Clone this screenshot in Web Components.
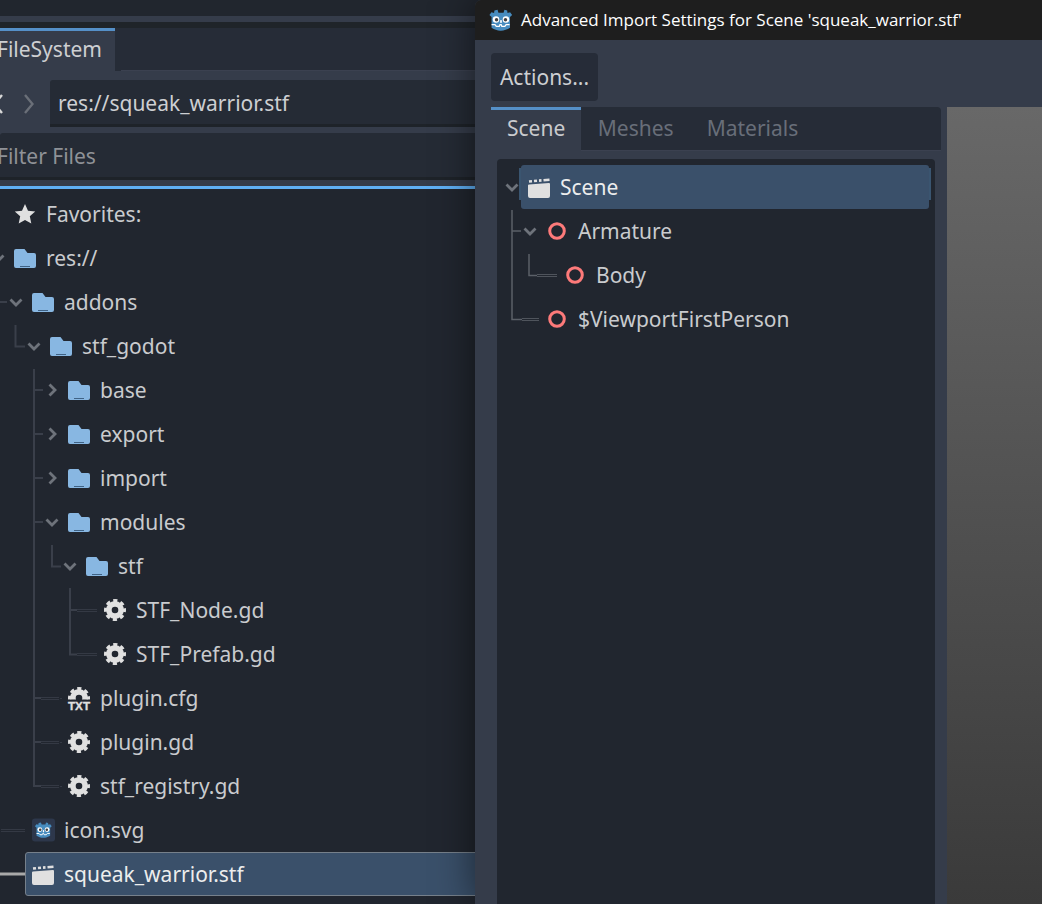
<!DOCTYPE html>
<html lang="en">
<head>
<meta charset="utf-8">
<title>Advanced Import Settings</title>
<style>
  html, body { margin: 0; height: 100%; overflow: hidden; background: #21262f; }
  body { font: 21px "Noto Sans", sans-serif; color: #c9cbce; }
</style>
</head>
<body>
<editor-page>
  <file-dock slot="dock"></file-dock>
  <import-window slot="window"></import-window>
</editor-page>

<script>
const GODOT_HEAD = `
  <path fill="#478cbf" d="M12 4l1 3.500h6L20 4l3.200.9.400 3 3-1 2.400 3.300-2.500 2.200V25c-3 2-7 3.400-10.500 3.400h-1C12 28.400 8 27 5 25V12.400L2.500 10.200 4.900 6.900l3 1 .4-3z"/>
  <circle cx="10.200" cy="15.400" r="3.800" fill="#fff"/><circle cx="21.800" cy="15.400" r="3.800" fill="#fff"/>
  <circle cx="10.800" cy="15.700" r="2" fill="#414042"/><circle cx="21.200" cy="15.700" r="2" fill="#414042"/>
  <rect x="15" y="16" width="2" height="3.500" rx=".8" fill="#fff"/>
  <path fill="none" stroke="#fff" stroke-width="1.500" d="M5 21.500h4l1.500 2h3.500l.8-2h1.400l.8 2h3.500l1.500-2h4"/>`;

const GEAR = `
  <circle cx="11" cy="11" r="6.100" fill="none" stroke="#e0e0e0" stroke-width="5.600"/>
  <circle cx="11" cy="11" r="9.400" fill="none" stroke="#e0e0e0" stroke-width="3.200" stroke-dasharray="4.100 3.282" stroke-dashoffset="2.050"/>`;

const ICONS = {
  star: `<path fill="#e0e0e0" d="M11 1l3 6.700 7.200.8-5.400 4.800 1.500 7.200L11 17l-6.300 3.500 1.500-7.200L.8 8.500 8 7.700z"/>`,
  folder: `<path fill="#88b7e2" d="M2 2h8.500l3 4H20a2 2 0 0 1 2 2v11a2 2 0 0 1-2 2H2a2 2 0 0 1-2-2V4a2 2 0 0 1 2-2z"/>
    <path stroke="#3f6285" d="M6 19.500h10"/>`,
  gear: GEAR,
  txt: `<svg x="0" y="0" width="22" height="12.500" viewBox="0 0 22 12.500" style="overflow:hidden">${GEAR}</svg>
    <text x="0" y="23" textLength="22" lengthAdjust="spacingAndGlyphs" font-family="Liberation Sans" font-weight="700" font-size="10.500" stroke="#e0e0e0" stroke-width=".3" fill="#e0e0e0">TXT</text>`,
  scene: `<path fill="#e0e0e0" d="M1 8.500l20-1.500a1 1 0 0 1 1 1V20a2 2 0 0 1-2 2H2a2 2 0 0 1-2-2V9.500a1 1 0 0 1 1-1z"/>
    <path stroke="#e0e0e0" stroke-width="2.600" d="M1 5.500l3-.3M6 5l3-.3M11 4.600l2.500-.2M15.500 4.200l6-.5"/>`,
  node: `<circle cx="11" cy="11" r="7.300" fill="none" stroke="#fd7a7a" stroke-width="3"/>`,
  godotfile: `<rect x="0" y="-.5" width="23" height="23" rx="3" fill="#2d374b"/><svg x="2" y="1.500" width="19" height="19" viewBox="1 2 30 28">${GODOT_HEAD}</svg>`,
  godot: `<svg x="-1" y="-1" width="24" height="24" viewBox="2 3 28 26">${GODOT_HEAD}</svg>`,
};

class GdIcon extends HTMLElement {
  connectedCallback() {
    const name = this.getAttribute('name');
    this.attachShadow({ mode: 'open' }).innerHTML = `
      <style>
        :host { display: block; width: 22px; height: 22px; flex: none; }
        svg { display: block; overflow: visible; }
      </style>
      <svg width="22" height="22" viewBox="0 0 22 22" aria-hidden="true">${ICONS[name] || ''}</svg>`;
  }
}
customElements.define('gd-icon', GdIcon);

class GdChevron extends HTMLElement {
  connectedCallback() {
    const dir = this.getAttribute('dir');
    const d = dir === 'down' ? 'M1.500 4.500L7 10l5.500-5.500' : dir === 'right' ? 'M4.500 1.500L10 7l-5.500 5.500' : '';
    this.attachShadow({ mode: 'open' }).innerHTML = `
      <style>
        :host { display: flex; width: 18px; align-items: center; justify-content: center; flex: none; }
        svg { display: block; }
      </style>
      <svg width="14" height="14" viewBox="0 0 14 14"><path d="${d}" fill="none" stroke="#6e737b" stroke-width="2.800"/></svg>`;
  }
}
customElements.define('gd-chevron', GdChevron);

class TreeRow extends HTMLElement {
  connectedCallback() {
    const depth = Number(this.getAttribute('depth') || 0);
    const arrow = this.getAttribute('arrow') || '';
    const icon = this.getAttribute('icon');
    this.attachShadow({ mode: 'open' }).innerHTML = `
      <style>
        :host {
          display: flex; height: 44px;
          margin-left: calc(var(--tree-origin, 14px) + ${depth * 18}px - 25px);
          margin-right: var(--tree-end, 0px);
        }
        .body {
          flex: 1; position: relative; display: flex; align-items: center; gap: 10px;
          padding-left: 7px; border-radius: 3px; box-sizing: border-box;
          white-space: nowrap;
        }
        :host([selected]) .body { background: #3a506a; color: #eceded; }
        :host([selected="outline"]) .body { border: 1px solid #76808b; padding-left: 6px; }
        :host([selected="bracket"]) .body::before,
        :host([selected="bracket"]) .body::after {
          content: ""; position: absolute; top: 3px; bottom: 9px; width: 2px; background: #3a5570;
        }
        :host([selected="bracket"]) .body::before { left: -2px; }
        :host([selected="bracket"]) .body::after { right: -2px; }
      </style>
      <gd-chevron dir="${arrow}"></gd-chevron>
      <div class="body"><gd-icon name="${icon}"></gd-icon><slot></slot></div>`;
  }
}
customElements.define('tree-row', TreeRow);

class GdTree extends HTMLElement {
  connectedCallback() {
    const guides = this.getAttribute('guides') || '';
    const faint = this.getAttribute('faint') || '';
    const strong = this.getAttribute('strong') || '';
    this.attachShadow({ mode: 'open' }).innerHTML = `
      <style>
        :host { display: block; position: relative; overflow: hidden; min-height: 0; }
        svg { position: absolute; left: 0; top: 0; width: 100%; height: 100%; pointer-events: none; }
        .g { fill: none; stroke: var(--guide, #3a3f4a); stroke-width: var(--guide-w, 2px); }
        .f { fill: none; stroke: var(--guide, #3a3f4a); stroke-width: 1px; opacity: .8; }
        .s { fill: none; stroke: #a9a9a9; stroke-width: 3px; }
      </style>
      <slot></slot>
      <svg aria-hidden="true"><path class="g" d="${guides}"/><path class="f" d="${faint}"/><path class="s" d="${strong}"/></svg>`;
  }
}
customElements.define('gd-tree', GdTree);

class GdTabs extends HTMLElement {
  connectedCallback() {
    const tabs = this.getAttribute('tabs').split(',');
    this.attachShadow({ mode: 'open' }).innerHTML = `
      <style>
        :host { display: flex; height: 44px; background: #262c37; box-sizing: border-box; border-radius: 0 4px 0 0; border-bottom: 1px solid #3b4150; }
        .tab { padding: 0 16.500px; display: flex; align-items: center; color: #686e79; box-sizing: border-box; border-top: 3px solid transparent; }
        .tab:first-of-type { padding-left: 16px; padding-right: 16px; color: #c9cbce; background: #353c4a; border-top-color: #5590c8; margin-bottom: -1px; }
        .tab span { margin-top: -5px; }
      </style>
      ${tabs.map(t => `<div class="tab"><span>${t}</span></div>`).join('')}`;
  }
}
customElements.define('gd-tabs', GdTabs);

class FileDock extends HTMLElement {
  connectedCallback() {
    this.attachShadow({ mode: 'open' }).innerHTML = `
      <style>
        :host { display: flex; flex-direction: column; height: 100%; background: #353c4a; overflow: hidden; }
        .top { height: 16px; background: #21262e; }
        .rule { height: 6px; }
        .edge { height: 6px; background: #1f2429; }
        .tabbar { display: flex; height: 43px; background: #262c37; }
        .tab { width: 115px; height: 43px; box-sizing: border-box; background: #353c4a; border-top: 3px solid #5590c8; display: flex; align-items: center; overflow: hidden; }
        .tab span { margin-left: -3px; margin-top: -4px; color: #cdcfd2; }
        .tabrest { flex: 1; border-bottom: 1px solid #3b4150; margin-left: 6px; }
        .nav { display: flex; align-items: center; margin-top: 9px; height: 47px; }
        .nav svg { flex: none; display: block; }
        .back { margin-left: -7px; }
        .fwd { margin-left: 21px; margin-right: 16px; }
        .field { height: 47px; background: #252b35; border-bottom: 3px solid #1e2329; box-sizing: border-box; display: flex; align-items: center; border-radius: 3px 0 0 0; white-space: nowrap; }
        .field span { margin-top: 2px; }
        .path { flex: 1; padding-left: 8px; color: #cdcfd2; }
        .filter { margin-top: 6px; color: #8f9297; }
        .filter span { margin-left: -3px; }
        .accent { height: 3px; margin-top: 6px; background: #5fb0f5; }
        gd-tree { flex: 1; padding-top: 3px; background: #21262f; --tree-origin: 14px; --tree-end: -10px; }
      </style>
      <div class="top"></div><div class="rule"></div><div class="edge"></div>
      <div class="tabbar"><div class="tab"><span>FileSystem</span></div><div class="tabrest"></div></div>
      <div class="nav">
        <svg class="back" width="10" height="20" viewBox="0 0 10 20"><path d="M9 1L1.500 10 9 19" fill="none" stroke="#d8d8d8" stroke-width="2.400"/></svg>
        <svg class="fwd" width="10" height="20" viewBox="0 0 10 20"><path d="M1 1l7.500 9L1 19" fill="none" stroke="#6a6f78" stroke-width="2.400"/></svg>
        <div class="field path"><span>res://squeak_warrior.stf</span></div>
      </div>
      <div class="field filter"><span>Filter Files</span></div>
      <div class="accent"></div>
      <gd-tree
        guides="M0 113H7 M15.500 136V157.500H25 M34 180V598 M34 201H43 M34 245H43 M34 289H43 M34 333H43 M34 509H41 M34 553H41 M34 597H41 M52 356V377.500H61 M70 399V465.500H77 M70 421H77"
        faint="M41 508.500H59 M41 510.500H59 M60 509.500H62 M41 552.500H59 M41 554.500H59 M60 553.500H62 M41 596.500H59 M41 598.500H59 M60 597.500H62 M77 420.500H97 M77 422.500H97 M77 464.500H97 M77 466.500H97 M1 640.500H25 M1 642.500H25"
        strong="M0 685H25">
        <tree-row icon="star">Favorites:</tree-row>
        <tree-row arrow="down" icon="folder">res://</tree-row>
        <tree-row depth="1" arrow="down" icon="folder">addons</tree-row>
        <tree-row depth="2" arrow="down" icon="folder">stf_godot</tree-row>
        <tree-row depth="3" arrow="right" icon="folder">base</tree-row>
        <tree-row depth="3" arrow="right" icon="folder">export</tree-row>
        <tree-row depth="3" arrow="right" icon="folder">import</tree-row>
        <tree-row depth="3" arrow="down" icon="folder">modules</tree-row>
        <tree-row depth="4" arrow="down" icon="folder">stf</tree-row>
        <tree-row depth="5" icon="gear">STF_Node.gd</tree-row>
        <tree-row depth="5" icon="gear">STF_Prefab.gd</tree-row>
        <tree-row depth="3" icon="txt">plugin.cfg</tree-row>
        <tree-row depth="3" icon="gear">plugin.gd</tree-row>
        <tree-row depth="3" icon="gear">stf_registry.gd</tree-row>
        <tree-row depth="1" icon="godotfile">icon.svg</tree-row>
        <tree-row depth="1" icon="scene" selected="outline">squeak_warrior.stf</tree-row>
      </gd-tree>`;
  }
}
customElements.define('file-dock', FileDock);

class ImportWindow extends HTMLElement {
  connectedCallback() {
    this.attachShadow({ mode: 'open' }).innerHTML = `
      <style>
        :host {
          display: flex; flex-direction: column; height: 100%; position: relative; z-index: 1;
          background: #353c4a; box-shadow: 0 0 40px rgba(0,0,0,.55); border-radius: 6px 0 0 0;
        }
        .title { height: 40px; flex: none; background: #1e1e1e; display: flex; align-items: center; gap: 9px; padding-left: 15px; border-radius: 6px 0 0 0; }
        .title span { font: 17px "Open Sans", sans-serif; color: #fff; white-space: nowrap; margin-top: -2px; }
        .toolbar { flex: none; padding: 13px 0 6px 16px; }
        .btn { width: 107px; height: 48px; box-sizing: border-box; background: #262c38; border-radius: 4px; display: flex; align-items: center; justify-content: center; color: #cdcfd2; }
        .main { flex: 1; display: flex; gap: 6px; padding-left: 16px; min-height: 0; }
        .left { flex: 0 0 450px; display: flex; flex-direction: column; }
        .inner { flex: 1; margin: 8px 6px 0; display: flex; min-height: 0; }
        gd-tree { flex: 1; padding-top: 6px; background: #21262f; border-radius: 4px 4px 0 0; --tree-origin: 31px; --tree-end: 6px; --guide: #5b6068; --guide-w: 1.5px; }
        .view { flex: 1; background: linear-gradient(#686868, #3a3a3a); }
      </style>
      <div class="title"><gd-icon name="godot"></gd-icon><span>Advanced Import Settings for Scene 'squeak_warrior.stf'</span></div>
      <div class="toolbar"><div class="btn">Actions...</div></div>
      <div class="main">
        <div class="left">
          <gd-tabs tabs="Scene,Meshes,Materials"></gd-tabs>
          <div class="inner">
            <gd-tree
              guides="M15 51V160.500H25 M15 72H24 M32 95V116.500H40"
              faint="M25 159.500H42 M25 161.500H42 M40 115.500H60 M40 117.500H60">
              <tree-row arrow="down" icon="scene" selected="bracket">Scene</tree-row>
              <tree-row depth="1" arrow="down" icon="node">Armature</tree-row>
              <tree-row depth="2" icon="node">Body</tree-row>
              <tree-row depth="1" icon="node">$ViewportFirstPerson</tree-row>
            </gd-tree>
          </div>
        </div>
        <div class="view"></div>
      </div>`;
  }
}
customElements.define('import-window', ImportWindow);

class EditorPage extends HTMLElement {
  connectedCallback() {
    this.attachShadow({ mode: 'open' }).innerHTML = `
      <style>
        :host { display: flex; width: 1042px; height: 904px; overflow: hidden; }
        ::slotted(file-dock) { flex: 0 0 475px; }
        ::slotted(import-window) { flex: 1; }
      </style>
      <slot name="dock"></slot><slot name="window"></slot>`;
  }
}
customElements.define('editor-page', EditorPage);
</script>
</body>
</html>
